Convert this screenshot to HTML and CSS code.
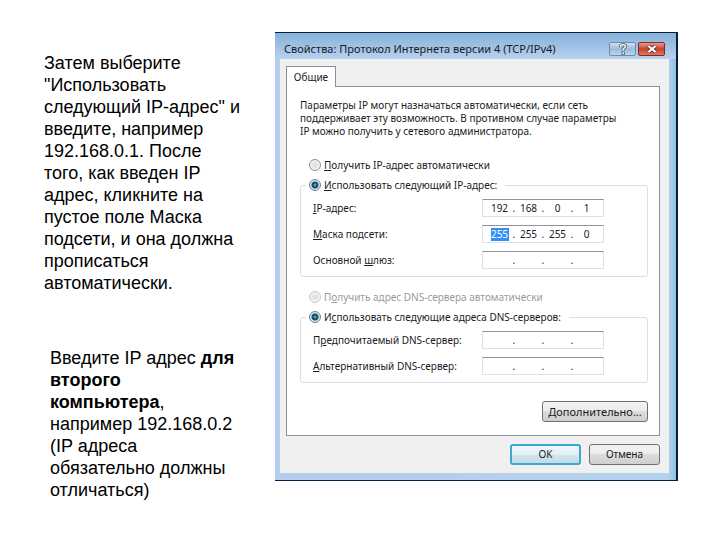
FILE: index.html
```html
<!doctype html>
<html lang="ru">
  <head>
    <meta charset="UTF-8" />
    <meta name="viewport" content="width=device-width, initial-scale=1.0" />
    <title>Настройка IP-адреса</title>
    <link rel="stylesheet" href="styles.css">
  </head>
  <body>
    <main class="slide">
      <div class="notes">
        <p>Затем выберите "Использовать следующий IP-адрес" и введите, например 192.168.0.1. После того, как введен IP адрес, кликните на пустое поле Маска подсети, и она должна прописаться автоматически.</p>
        <p class="second">Введите IP адрес <b>для второго компьютера</b>, например 192.168.0.2 (IP адреса обязательно должны отличаться)</p>
      </div>

      <form class="window">
        <header class="titlebar">
          <h1>Свойства: Протокол Интернета версии 4 (TCP/IPv4)</h1>
          <button type="button" class="caption help" aria-label="Справка">
            <svg width="12" height="12" viewBox="0 0 12 12">
              <path d="M3.5 4.2V3.4Q3.5 1.8 6 1.8T8.5 3.6Q8.5 4.8 6.2 6V7.6" fill="none" stroke="#4a5a70" stroke-width="3" />
              <path d="M3.5 4.2V3.4Q3.5 1.8 6 1.8T8.5 3.6Q8.5 4.8 6.2 6V7.6" fill="none" stroke="#fff" stroke-width="1.4" />
              <rect x="4.9" y="9" width="2.6" height="2.4" fill="#fff" stroke="#4a5a70" stroke-width=".8" />
            </svg>
          </button>
          <button type="button" class="caption close" aria-label="Закрыть">
            <svg width="12" height="12" viewBox="0 0 12 12">
              <path d="M2.5 3L9.5 9M9.5 3L2.5 9" stroke="#6b2a26" stroke-width="4" />
              <path d="M2.5 3L9.5 9M9.5 3L2.5 9" stroke="#fff" stroke-width="2.2" />
            </svg>
          </button>
        </header>

        <div class="client">
          <button type="button" class="tab">Общие</button>

          <div class="panel">
            <p class="intro">Параметры IP могут назначаться автоматически, если сеть поддерживает эту возможность. В противном случае параметры IP можно получить у сетевого администратора.</p>

            <label class="option"><input type="radio" name="ip" /><span><u>П</u>олучить IP-адрес автоматически</span></label>

            <fieldset>
              <legend><label class="option"><input type="radio" name="ip" checked /><span><u>И</u>спользовать следующий IP-адрес:</span></label></legend>
              <div class="row">
                <label for="ip1"><u>I</u>P-адрес:</label>
                <div class="address">
                  <input id="ip1" value="192" /><i>.</i><input aria-label="IP 2" value="168" /><i>.</i><input aria-label="IP 3" value="0" /><i>.</i><input aria-label="IP 4" value="1" />
                </div>
              </div>
              <div class="row">
                <label for="mask1"><u>М</u>аска подсети:</label>
                <div class="address">
                  <input id="mask1" class="selected" value="255" /><i>.</i><input aria-label="Маска 2" value="255" /><i>.</i><input aria-label="Маска 3" value="255" /><i>.</i><input aria-label="Маска 4" value="0" />
                </div>
              </div>
              <div class="row">
                <label for="gate1">Основной <u>ш</u>люз:</label>
                <div class="address">
                  <input id="gate1" /><i>.</i><input aria-label="Шлюз 2" /><i>.</i><input aria-label="Шлюз 3" /><i>.</i><input aria-label="Шлюз 4" />
                </div>
              </div>
            </fieldset>

            <label class="option disabled"><input type="radio" name="dns" disabled /><span>П<u>о</u>лучить адрес DNS-сервера автоматически</span></label>

            <fieldset>
              <legend><label class="option"><input type="radio" name="dns" checked /><span>И<u>с</u>пользовать следующие адреса DNS-серверов:</span></label></legend>
              <div class="row">
                <label for="dns1">П<u>р</u>едпочитаемый DNS-сервер:</label>
                <div class="address">
                  <input id="dns1" /><i>.</i><input aria-label="DNS 2" /><i>.</i><input aria-label="DNS 3" /><i>.</i><input aria-label="DNS 4" />
                </div>
              </div>
              <div class="row">
                <label for="alt1"><u>А</u>льтернативный DNS-сервер:</label>
                <div class="address">
                  <input id="alt1" /><i>.</i><input aria-label="Альтернативный DNS 2" /><i>.</i><input aria-label="Альтернативный DNS 3" /><i>.</i><input aria-label="Альтернативный DNS 4" />
                </div>
              </div>
            </fieldset>

            <button type="button" class="btn advanced"><u>Д</u>ополнительно...</button>
          </div>

          <div class="actions">
            <button type="button" class="btn ok">OK</button>
            <button type="button" class="btn">Отмена</button>
          </div>
        </div>
      </form>
    </main>
  </body>
</html>
```
FILE: styles.css
```css
* {
  box-sizing: border-box;
}
body {
  margin: 0;
  background: #fff;
}
.slide {
  display: flex;
  align-items: flex-start;
  padding: 32px 42px 24px 44px;
}
.notes {
  width: 231px;
  flex: none;
  padding-top: 20px;
  font: 18px/22px "Liberation Sans", Arial, sans-serif;
  color: #000;
}
.notes p {
  margin: 0;
  width: 198px;
}
.notes .second {
  margin: 53px 0 0 6px;
  width: 190px;
}

/* dialog window */
.window {
  flex: 1;
  padding: 0 7px 7px 5px;
  background: linear-gradient(to right, #b4cdec, #b4d2ee 98%, #8ec0e4);
  border: solid #06203c;
  border-width: 1px 2px 1px 0;
  font: 10px/13px "Noto Sans", "Open Sans", sans-serif;
  color: #1a1a24;
}
.titlebar {
  display: flex;
  align-items: center;
  height: 26px;
  margin: 0 -7px 0 -5px;
  padding: 6px 11px 0 9px;
  background: linear-gradient(#86b2da, #a4c4e6 60%, #b8d2ee);
}
.titlebar h1 {
  flex: 1;
  margin: 0;
  font-size: 11px;
  font-weight: normal;
  line-height: 16px;
  white-space: nowrap;
}
.caption {
  display: flex;
  align-items: center;
  justify-content: center;
  width: 27px;
  height: 14px;
  margin-left: 2px;
  padding: 0;
  border: 1px solid #6c8cb0;
  border-radius: 2px;
  background: linear-gradient(#cfe0f2, #9bbbdc 50%, #bcd5ed);
}
.caption.close {
  border-color: #7c2c28;
  background: linear-gradient(#e79a8c, #c8402c 50%, #e07a60);
}
.client {
  padding: 7px 9px 8px 6px;
  background: #f0f0f0;
}
.tab {
  position: relative;
  display: block;
  width: 50px;
  height: 21px;
  margin-bottom: -1px;
  padding: 0;
  border: 1px solid #8a8f98;
  border-bottom: 0;
  background: #fff;
  color: inherit;
  font: inherit;
}
.panel {
  display: flex;
  flex-direction: column;
  align-items: stretch;
  padding: 12px 11px 13px 13px;
  border: 1px solid #8a8f98;
  background: #fff;
}
.intro {
  margin: 0 0 20px;
  padding-right: 25px;
}
.option {
  display: flex;
  align-items: center;
  gap: 3px;
  height: 14px;
  padding-left: 9px;
  white-space: nowrap;
}
.option input {
  appearance: none;
  width: 12px;
  height: 12px;
  margin: 0;
  border: 1px solid #8b9096;
  border-radius: 50%;
  background: radial-gradient(#d8dade, #f4f4f4 70%);
}
.option input:checked {
  border-color: #6d8494;
  background: radial-gradient(#6fc4e4 0, #14506e 2px, #1b4a63 3px, #d4e6ee 4px);
}
.option.disabled {
  color: #9a9a9e;
}
.option.disabled input {
  border-color: #c4c6c8;
}
fieldset {
  display: flex;
  flex-direction: column;
  gap: 8px;
  min-width: 0;
  margin: 6px 0 13px;
  padding: 7px 43px 7px 12px;
  border: 1px solid #dcdfe2;
  border-radius: 3px;
}
legend {
  margin-left: -7px;
  padding: 0 8px 0 0;
}
legend .option {
  padding-left: 3px;
}
.row {
  display: flex;
  align-items: center;
  justify-content: space-between;
}
.address {
  display: flex;
  align-items: center;
  justify-content: center;
  gap: 4px;
  width: 122px;
  height: 18px;
  border: 1px solid #dde0e6;
  border-top-color: #8f939c;
  background: #fff;
}
.address input {
  width: 18px;
  height: 13px;
  padding: 0;
  border: 0;
  background: transparent;
  color: inherit;
  font: inherit;
  text-align: center;
}
.address .selected {
  background: #3390f0;
  color: #fff;
}
.address i {
  width: 3px;
  font-style: normal;
}
.btn {
  width: 71px;
  height: 21px;
  padding: 0;
  border: 1px solid #707070;
  border-radius: 3px;
  background: linear-gradient(#f3f3f3, #ebebeb 50%, #dcdcdc 50%, #cfcfcf);
  color: inherit;
  font: inherit;
}
.btn.advanced {
  align-self: flex-end;
  width: 106px;
  margin-top: 5px;
  font-size: 11px;
}
.btn.ok {
  border: 2px solid #3ba9cf;
  background: linear-gradient(#eef6fa, #e4eff5 50%, #d0e4ee 50%, #c4dce8);
}
.actions {
  display: flex;
  justify-content: flex-end;
  gap: 8px;
  margin-top: 8px;
}
```
